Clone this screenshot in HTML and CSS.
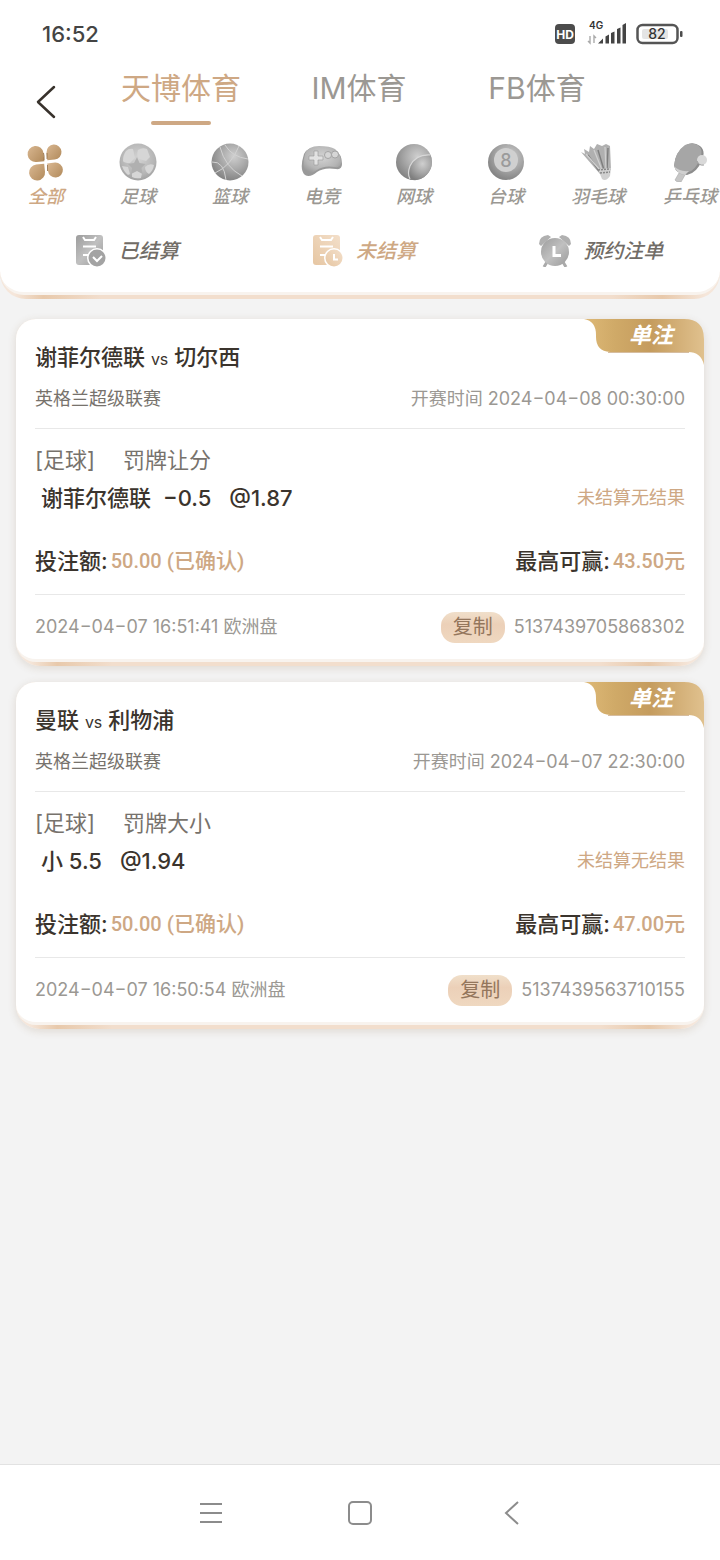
FILE: index.html
```html
<!DOCTYPE html>
<html lang="zh-CN">
<head>
  <meta charset="utf-8">
  <meta name="viewport" content="width=device-width">
  <title>注单</title>
  <link rel="stylesheet" href="styles.css">
</head>
<body>
<svg class="defs" aria-hidden="true">
  <defs>
    <linearGradient id="gold" x1="0" y1="0" x2="1" y2="1">
      <stop offset="0" stop-color="#d9b791"/><stop offset="1" stop-color="#b18a5b"/>
    </linearGradient>
    <radialGradient id="ball" cx=".6" cy=".35" r=".7">
      <stop offset="0" stop-color="#cfcfcf"/><stop offset=".5" stop-color="#a9a9a9"/><stop offset="1" stop-color="#7f7f7f"/>
    </radialGradient>
    <radialGradient id="soft" cx=".5" cy=".4" r=".65">
      <stop offset="0" stop-color="#d4d4d4"/><stop offset=".7" stop-color="#b5b5b5"/><stop offset="1" stop-color="#9a9a9a"/>
    </radialGradient>
    <linearGradient id="gray" x1="0" y1="0" x2="1" y2="1">
      <stop offset="0" stop-color="#9c9c9c"/><stop offset=".5" stop-color="#c0c0c0"/><stop offset="1" stop-color="#9a9a9a"/>
    </linearGradient>
    <linearGradient id="peach" x1="0" y1="1" x2="1" y2="0">
      <stop offset="0" stop-color="#e6c6a2"/><stop offset="1" stop-color="#f3dfca"/>
    </linearGradient>
    <linearGradient id="tag" x1="0" y1="0" x2="1" y2="0">
      <stop offset="0" stop-color="#deb977"/><stop offset=".25" stop-color="#d0aa68"/><stop offset=".55" stop-color="#c59c5e"/><stop offset="1" stop-color="#e0c18e"/>
    </linearGradient>
  </defs>
  <symbol id="tag-shape" viewBox="0 0 120 48">
    <path d="M0 0H100Q120 0 120 20V46Q117 33 104 33H26Q12 32 12 18V16Q12 2 0 0Z" fill="url(#tag)"/>
    <path d="M24 33.5H105" stroke="#d6bda0"/>
  </symbol>
</svg>

<header class="header">
  <div class="header-body">
    <div class="status">
      <span class="time">16:52</span>
      <svg width="130" height="28" viewBox="0 0 130 28">
        <rect x="1" y="4" width="20" height="20" rx="4" fill="#4c4c4c"/>
        <text x="11" y="18.5" text-anchor="middle" font-size="12" font-weight="700" fill="#fff">HD</text>
        <text x="35" y="9" font-size="10" font-weight="600" fill="#333">4G</text>
        <path d="M36 16v7l-2-2M40 23v-7l2 2" fill="none" stroke="#aaa" stroke-width="1.4"/>
        <path d="M44 23.500l5-5v5zM51.500 16.500l3.500-2v9h-3.500zM57 13l3.500-1.500v12h-3.500zM63 9l3.500-1.500v16h-3.500zM68.500 5l3.500-2v20.500h-3.500z" fill="#444"/>
        <rect x="83.500" y="5" width="40" height="18" rx="5" fill="#fff" stroke="#555" stroke-width="2.500"/>
        <rect x="88" y="9" width="26" height="10" rx="2" fill="#e4e4e4"/>
        <rect x="126" y="11" width="2.500" height="6" rx="1" fill="#4c4c4c"/>
        <text x="103" y="19" text-anchor="middle" font-size="14" font-weight="500" fill="#333">82</text>
      </svg>
    </div>

    <div class="topbar">
      <button class="back" aria-label="返回">
        <svg width="24" height="36" viewBox="0 0 24 36"><path d="M20 3L4 18L20 33" fill="none" stroke="#38322c" stroke-width="2.500" stroke-linecap="round" stroke-linejoin="round"/></svg>
      </button>
      <nav class="tabs">
        <button class="tab active">天博体育</button>
        <button class="tab">IM体育</button>
        <button class="tab">FB体育</button>
      </nav>
    </div>

    <nav class="sports">
      <button class="sport active">
        <svg viewBox="0 0 40 40">
          <g fill="url(#gold)" transform="rotate(-6 20 20)">
            <path d="M18.500 19H10.500A8 8 0 1 1 18.500 11Z"/>
            <path d="M21.500 18.500V10.500A7.500 7.500 0 1 1 29 18.500Z"/>
            <path d="M18 21.500V29.500A8 8 0 1 1 10 21.500Z"/>
            <path d="M21 21.500H29A7.500 7.500 0 1 1 21 29Z"/>
          </g>
          <path d="M17.500 11q1 3 .5 7M21.500 23v6M21 17v-6" fill="none" stroke="#8f6a40" stroke-width=".8"/>
        </svg>
        <span>全部</span>
      </button>
      <button class="sport">
        <svg viewBox="0 0 40 40">
          <circle cx="20" cy="20" r="18.500" fill="url(#soft)"/>
          <g fill="#d6d6d6">
            <path d="M8 9q3-3 7-2l2 9-5 5q-6 0-7-2 0-6 3-10z"/><path d="M20 8q4-3 9-1l3 8-4 4-7-2q-3-4-1-9z"/>
            <path d="M4 24l6 1 2 7-2 1q-4-3-6-9z"/><path d="M14 31l5-3 5 3-1 5q-5 1-9-1z"/><path d="M27 25q4-4 9-2-1 6-5 9-4-2-4-7z"/>
          </g>
          <path d="M19 15l2.500 6 6 1-4 4 1 6-5.500-3-6 3 1-6-4-4 6-1z" fill="#b0b0b0"/>
        </svg>
        <span>足球</span>
      </button>
      <button class="sport">
        <svg viewBox="0 0 40 40">
          <circle cx="20" cy="20" r="18.500" fill="url(#ball)"/>
          <path d="M10 5Q15 25 32 34M5 31Q21 24 29 4M15 3Q22 15 38 17M2 20Q14 19 16 38" fill="none" stroke="#d2d2d2" stroke-width="1"/>
        </svg>
        <span>篮球</span>
      </button>
      <button class="sport">
        <svg class="wide" viewBox="0 0 44 40">
          <path d="M4 12Q7 5 19 5T35 8Q42 12 42 22Q42 28 36 27Q24 25 17 30Q10 36 5 33Q-1 28 4 12Z" fill="#999"/>
          <path d="M5 12Q8 4 19 4T35 7Q41 12 41 20Q41 26 35 25Q24 23 17 28Q10 33 7 30Q1 26 5 12Z" fill="url(#soft)"/>
          <path d="M14 9h4v5h5v4h-5v5h-4v-5h-5v-4h5z" fill="#e2e2e2" stroke="#999" stroke-width=".6"/>
          <circle cx="28" cy="13" r="3.500" fill="#d6d6d6" stroke="#999" stroke-width=".8"/>
          <circle cx="35" cy="12.500" r="3.500" fill="#d6d6d6" stroke="#999" stroke-width=".8"/>
        </svg>
        <span>电竞</span>
      </button>
      <button class="sport">
        <svg viewBox="0 0 40 40">
          <circle cx="20" cy="20" r="18" fill="url(#ball)"/>
          <path d="M36.500 13Q22 12 16 24Q13 32 16 37.500Q30 41 37 26Q39 19 36.500 13Z" fill="url(#ball)"/>
          <path d="M36.500 13Q22 12 16 24Q13 32 16 37" fill="none" stroke="#d8d8d8" stroke-width="1.200"/>
        </svg>
        <span>网球</span>
      </button>
      <button class="sport">
        <svg viewBox="0 0 40 40">
          <circle cx="20" cy="20" r="18" fill="url(#ball)"/>
          <circle cx="20" cy="18" r="12" fill="#d0d0d0"/>
          <text class="upright" x="20" y="24.500" text-anchor="middle" font-size="18" fill="#9b9b9b">8</text>
        </svg>
        <span>台球</span>
      </button>
      <button class="sport">
        <svg viewBox="0 0 40 40">
          <path d="M3 10l4 2-1-5 5 3 1-6 4 3 3-5 5 2 4-2 4 2 1 24-11 4z" fill="#b0b0b0"/>
          <path d="M10 13l11 16M20 8l6 20M30 6l-1 22" stroke="#7d7d7d" stroke-width="1.400"/>
          <path d="M8 12l13 15M16 8l8 20M27 5l1 22" stroke="#d0d0d0" stroke-width="1.200"/>
          <path d="M20 27l13-1-1 8q-4 6-8 3z" fill="#d0d0d0"/>
          <path d="M20 28l12-1M22 31l10-1" stroke="#888" stroke-width="1.500" stroke-dasharray="2 1"/>
        </svg>
        <span>羽毛球</span>
      </button>
      <button class="sport">
        <svg viewBox="0 0 40 40">
          <path d="M9 31l6 2-4 7q-4 1-6-2z" fill="#c6c6c6" stroke="#aaa" stroke-width=".6"/>
          <path d="M4 24Q5 10 16 3Q23-1 30 4Q36 9 32 18Q27 31 17 33Q6 32 4 24Z" fill="#8d8d8d"/>
          <path d="M4 24Q5 10 15 3Q22 0 28 3Q34 8 30 17Q25 29 18 30Q8 30 4 24Z" fill="#a6a6a6"/>
          <path d="M4 24Q9 30 19 29L15 33Q6 31 4 24Z" fill="#d0d0d0"/>
          <circle cx="32" cy="18" r="5" fill="#d9d9d9"/>
          <path d="M27 19q2 5 7 4" fill="none" stroke="#9d9d9d"/>
        </svg>
        <span>乒乓球</span>
      </button>
    </nav>

    <nav class="filters">
      <button class="filter">
        <svg viewBox="0 0 32 32">
          <rect x="1" y="0" width="27" height="30" rx="3" fill="url(#gray)"/>
          <path d="M8 2l2 3h9l2-3M8 11.500h13M8 20h6" fill="none" stroke="#fff" stroke-width="2"/>
          <circle cx="22" cy="23" r="10" fill="#fff"/><circle cx="22" cy="23" r="8.500" fill="#a3a3a3"/>
          <path d="M18 22l4 4 5-5" fill="none" stroke="#fff" stroke-width="2"/>
        </svg>
        <span>已结算</span>
      </button>
      <button class="filter active">
        <svg viewBox="0 0 32 32">
          <rect x="1" y="0" width="27" height="30" rx="3" fill="url(#peach)"/>
          <path d="M8 2l2 3h9l2-3M8 11.500h13M8 20h6" fill="none" stroke="#fff" stroke-width="2"/>
          <circle cx="22" cy="23" r="10" fill="#fff"/><circle cx="22" cy="23" r="8.500" fill="url(#peach)"/>
          <path d="M22 19v5.500h4" fill="none" stroke="#fff" stroke-width="2"/>
        </svg>
        <span>未结算</span>
      </button>
      <button class="filter">
        <svg viewBox="0 0 32 32">
          <path d="M0 9Q0 1 9 0L12 2L2 11ZM32 9Q32 1 23 0L20 2L30 11Z" fill="#b0b0b0"/>
          <path d="M8 27l-3 5M24 27l3 5" stroke="#aaa" stroke-width="3"/>
          <circle cx="16" cy="17" r="14" fill="url(#gray)"/>
          <path d="M15 11v9.500h7" fill="none" stroke="#fff" stroke-width="3"/>
        </svg>
        <span>预约注单</span>
      </button>
    </nav>
  </div>
</header>

<main class="list">
  <article class="card">
    <div class="card-body">
      <div class="card-tag"><svg width="120" height="48"><use href="#tag-shape"/></svg><span>单注</span></div>
      <h2 class="match">谢菲尔德联 <small>vs</small> 切尔西</h2>
      <div class="row league"><span>英格兰超级联赛</span><time>开赛时间 2024−04−08 00:30:00</time></div>
      <div class="market"><span>[足球]</span><span>罚牌让分</span></div>
      <div class="row pick">
        <div class="pick-main"><span>谢菲尔德联</span><span>−0.5</span><span class="odds">@1.87</span></div>
        <span class="result">未结算无结果</span>
      </div>
      <div class="row stake">
        <div><span>投注额:</span><b>50.00 <i>(已确认)</i></b></div>
        <div><span>最高可赢:</span><b>43.50<i>元</i></b></div>
      </div>
      <div class="row foot">
        <time>2024−04−07 16:51:41 欧洲盘</time>
        <div class="order"><button class="copy">复制</button><span>5137439705868302</span></div>
      </div>
    </div>
  </article>

  <article class="card">
    <div class="card-body">
      <div class="card-tag"><svg width="120" height="48"><use href="#tag-shape"/></svg><span>单注</span></div>
      <h2 class="match">曼联 <small>vs</small> 利物浦</h2>
      <div class="row league"><span>英格兰超级联赛</span><time>开赛时间 2024−04−07 22:30:00</time></div>
      <div class="market"><span>[足球]</span><span>罚牌大小</span></div>
      <div class="row pick">
        <div class="pick-main"><span>小 5.5</span><span class="odds">@1.94</span></div>
        <span class="result">未结算无结果</span>
      </div>
      <div class="row stake">
        <div><span>投注额:</span><b>50.00 <i>(已确认)</i></b></div>
        <div><span>最高可赢:</span><b>47.00<i>元</i></b></div>
      </div>
      <div class="row foot">
        <time>2024−04−07 16:50:54 欧洲盘</time>
        <div class="order"><button class="copy">复制</button><span>5137439563710155</span></div>
      </div>
    </div>
  </article>
</main>

<footer class="sysnav">
  <button aria-label="菜单"><svg width="28" height="28" viewBox="0 0 28 28"><path d="M4 5h22M4 14h22M4 23h22"/></svg></button>
  <button aria-label="主页"><svg width="28" height="28" viewBox="0 0 28 28"><rect x="3" y="3" width="22" height="22" rx="4"/></svg></button>
  <button aria-label="后退"><svg width="28" height="28" viewBox="0 0 28 28"><path d="M22 3L10 14L22 25"/></svg></button>
</footer>
</body>
</html>
```
FILE: styles.css
```css
* {
  box-sizing: border-box;
}
body {
  margin: 0;
  min-height: 100vh;
  display: flex;
  flex-direction: column;
  background: #f3f3f3;
  color: #3b342d;
  font: 18px/24px Inter, "Noto Sans CJK SC", sans-serif;
}
button {
  padding: 0;
  border: 0;
  background: none;
  color: inherit;
  font: inherit;
  cursor: pointer;
}
svg {
  display: block;
}
.defs {
  position: absolute;
  width: 0;
  height: 0;
}

/* white panel standing on a gold edge */
.header, .card {
  padding-bottom: 4px;
  background: linear-gradient(to right, #f5e6da 2%, #e8c9ab 6%, #f2decd 14%, #f2decd 85%, #e8c9ab 92%, #f5e6da 98%);
}
.header {
  border-radius: 0 0 26px 26px;
}
.header-body {
  padding-bottom: 25px;
  background: #fff;
  border-bottom: 3px solid #f8f3ee;
  border-radius: 0 0 24px 24px;
}
.status {
  display: flex;
  justify-content: space-between;
  align-items: center;
  height: 68px;
  padding: 0 36px 0 42px;
}
.time {
  font-size: 22px;
  font-weight: 500;
  color: #444;
}
.topbar {
  display: flex;
}
.back {
  width: 92px;
  height: 46px;
  align-self: flex-end;
  display: flex;
  align-items: center;
  justify-content: center;
}
.tabs {
  flex: 1;
  display: grid;
  grid-template-columns: repeat(3, 1fr);
  margin-right: 94px;
}
.tab {
  font-size: 30px;
  line-height: 40px;
  color: #9b9893;
}
.tab::after {
  content: "";
  display: block;
  width: 60px;
  height: 4px;
  margin: 13px auto 0;
  border-radius: 2px;
}
.tab.active {
  color: #cea884;
}
.tab.active::after {
  background: #cea884;
}
.sports {
  display: flex;
  margin-top: 17px;
  overflow: hidden;
}
.sport {
  flex: none;
  width: 92px;
  font-style: italic;
  font-weight: 500;
  color: #9b9893;
}
.sport svg {
  width: 40px;
  height: 40px;
  margin: 0 auto 3px;
}
.sport .wide {
  width: 44px;
}
.sport .upright {
  font-style: normal;
}
.sport span {
  display: block;
}
.sport.active, .filter.active {
  color: #cea884;
}
.filters {
  display: grid;
  grid-template-columns: repeat(3, 1fr);
  margin-top: 26px;
  padding-left: 8px;
}
.filter {
  display: flex;
  align-items: center;
  justify-content: center;
  gap: 12px;
  font-size: 20px;
  font-style: italic;
  font-weight: 500;
  color: #716c66;
}
.filter svg {
  width: 32px;
  height: 32px;
}

/* bets */
.list {
  padding: 20px 16px;
  display: flex;
  flex-direction: column;
  gap: 16px;
}
.card {
  border-radius: 20px 20px 24px 24px;
  box-shadow: 0 2px 8px rgba(120, 80, 40, .16);
}
.card-body {
  position: relative;
  padding: 20px 19px 0;
  background: #fff;
  border-bottom: 3px solid #f8f3ee;
  border-radius: 20px;
}
.card-tag {
  position: absolute;
  top: 0;
  right: 0;
}
.card-tag span {
  position: absolute;
  top: 0;
  right: 31px;
  color: #fff;
  font-size: 22px;
  font-style: italic;
  font-weight: 700;
  line-height: 32px;
  white-space: nowrap;
}
.row {
  display: flex;
  justify-content: space-between;
  align-items: center;
}
.match {
  margin: 0;
  font-size: 22px;
  font-weight: 500;
  line-height: 36px;
}
.match small {
  font-size: 16px;
  font-weight: 400;
}
.league {
  padding: 10px 0 17px;
  border-bottom: 1px solid #e8e8e8;
  color: #77726c;
}
.league time {
  color: #9b9893;
}
.market {
  display: flex;
  gap: 28px;
  margin-top: 15px;
  font-size: 22px;
  line-height: 32px;
  color: #77726c;
}
.pick {
  margin-top: 6px;
  padding-left: 6px;
  line-height: 32px;
}
.pick-main {
  display: flex;
  gap: 12px;
  font-size: 22px;
  font-weight: 500;
}
.odds {
  padding-left: 6px;
}
.result {
  color: #cea884;
}
.stake {
  padding: 31px 0 17px;
  border-bottom: 1px solid #e8e8e8;
  font-size: 22px;
  font-weight: 500;
  line-height: 32px;
}
.stake div {
  display: flex;
  gap: 3px;
}
.stake b {
  font-family: Roboto, "Noto Sans CJK SC", sans-serif;
  font-size: 20px;
  font-weight: 500;
  color: #cea884;
}
.stake i {
  font-size: 21px;
  font-style: normal;
}
.foot {
  height: 64px;
  color: #9b9893;
}
.order {
  display: flex;
  align-items: center;
  gap: 9px;
}
.copy {
  padding: 0 12px;
  border-radius: 14px;
  background: linear-gradient(#f0dfca, #ecd0b8 40%, #efd8c0);
  color: #94765c;
  font-size: 20px;
  line-height: 31px;
}

/* system buttons */
.sysnav {
  display: flex;
  justify-content: center;
  gap: 106px;
  height: 96px;
  margin-top: auto;
  background: #fff;
  border-top: 1px solid #e2e2e2;
}
.sysnav button {
  width: 44px;
  display: flex;
  align-items: center;
  justify-content: center;
}
.sysnav svg {
  fill: none;
  stroke: #8c8c8c;
  stroke-width: 2;
}
```
